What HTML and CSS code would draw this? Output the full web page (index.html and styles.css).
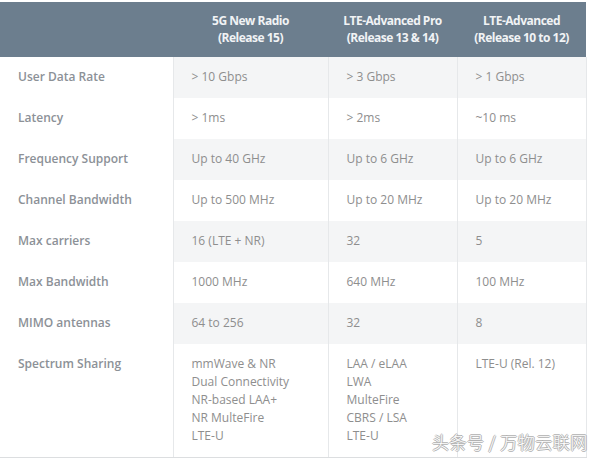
FILE: index.html
```html
<!DOCTYPE html>
<html>
<head>
<meta charset="utf-8">
<link rel="stylesheet" href="styles.css">
</head>
<body>
<div class="wrap">
<table class="cmp">
  <colgroup>
    <col class="c1"><col class="c2"><col class="c3"><col class="c4">
  </colgroup>
  <thead>
    <tr>
      <th></th>
      <th>5G New Radio<br>(Release 15)</th>
      <th>LTE-Advanced Pro<br>(Release 13 &amp; 14)</th>
      <th>LTE-Advanced<br>(Release 10 to 12)</th>
    </tr>
  </thead>
  <tbody>
    <tr class="odd"><td class="lbl">User Data Rate</td><td>&gt; 10 Gbps</td><td>&gt; 3 Gbps</td><td>&gt; 1 Gbps</td></tr>
    <tr><td class="lbl">Latency</td><td>&gt; 1ms</td><td>&gt; 2ms</td><td>~10 ms</td></tr>
    <tr class="odd"><td class="lbl">Frequency Support</td><td>Up to 40 GHz</td><td>Up to 6 GHz</td><td>Up to 6 GHz</td></tr>
    <tr><td class="lbl">Channel Bandwidth</td><td>Up to 500 MHz</td><td>Up to 20 MHz</td><td>Up to 20 MHz</td></tr>
    <tr class="odd"><td class="lbl">Max carriers</td><td>16 (LTE + NR)</td><td>32</td><td>5</td></tr>
    <tr><td class="lbl">Max Bandwidth</td><td>1000 MHz</td><td>640 MHz</td><td>100 MHz</td></tr>
    <tr class="odd"><td class="lbl">MIMO antennas</td><td>64 to 256</td><td>32</td><td>8</td></tr>
    <tr><td class="lbl">Spectrum Sharing</td><td>mmWave &amp; NR<br>Dual Connectivity<br>NR-based LAA+<br>NR MulteFire<br>LTE-U</td><td>LAA / eLAA<br>LWA<br>MulteFire<br>CBRS / LSA<br>LTE-U</td><td>LTE-U (Rel. 12)</td></tr>
  </tbody>
</table>
<div class="mark">头条号 / 万物云联网</div>
</div>
</body>
</html>
```
FILE: styles.css
```css
html, body {
  margin: 0;
  padding: 0;
  background: #ffffff;
}
.wrap {
  position: relative;
  width: 593px;
  height: 458px;
  padding-top: 2px;
  box-sizing: border-box;
  font-family: "Open Sans", "Noto Sans", sans-serif;
  font-size: 12px;
}
.cmp {
  border-collapse: collapse;
  table-layout: fixed;
  width: 586px;
}
.c1 { width: 173px; }
.c2 { width: 155px; }
.c3 { width: 129px; }
.c4 { width: 129px; }
.cmp th {
  background: #6c7e8e;
  color: #f1f3f5;
  font-weight: 700;
  line-height: 17px;
  padding: 10px 4px 11px;
  text-align: center;
  letter-spacing: -0.5px;
}
.cmp td {
  padding: 11px 10px 12px 18px;
  line-height: 18px;
  vertical-align: top;
  color: #8e8e8e;
  border-left: 1px solid #e6e8ea;
  border-right: 1px solid #e6e8ea;
}
.cmp tbody tr:last-child td {
  border-bottom: 1px solid #dcdee0;
}
.cmp td.lbl {
  color: #8c9197;
  font-weight: 600;
  border-left: none;
  background: #ffffff;
}
.cmp tr.odd td {
  background: #f4f5f6;
}
.cmp tr.odd td.lbl {
  background: #ffffff;
}
.mark {
  position: absolute;
  left: 432px;
  top: 429px;
  font-family: "Noto Sans CJK SC", sans-serif;
  font-weight: 300;
  font-size: 17px;
  color: #ffffff;
  letter-spacing: 0.5px;
  text-shadow: -1px 0 #b0b0b0, 1px 0 #b0b0b0, 0 -1px #b0b0b0, 0 1px #b0b0b0;
}
```
